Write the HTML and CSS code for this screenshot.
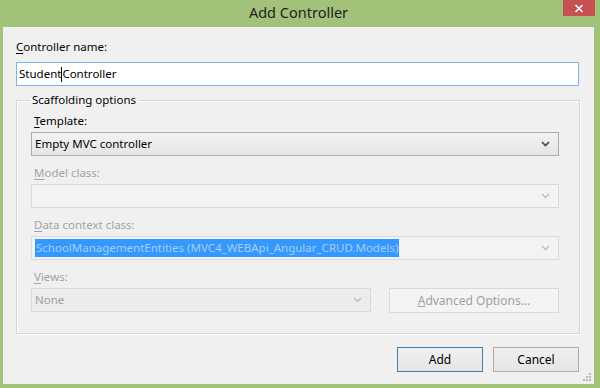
FILE: index.html
```html
<!DOCTYPE html>
<html lang="en">
<head>
    <meta charset="UTF-8">
    <title>Add Controller</title>
    <link rel="stylesheet" href="styles.css">
</head>
<body>
    <div class="window">
        <div class="titlebar">
            <span class="title">Add Controller</span>
            <button class="close" aria-label="Close">
                <svg width="10" height="9" viewBox="0 0 10 9"><path d="M1.5 1 L8.5 8 M8.5 1 L1.5 8" stroke="#fff" stroke-width="1.6"/></svg>
            </button>
        </div>

        <div class="client">
            <div class="label"><u>C</u>ontroller name:</div>
            <div class="textbox">Student<span class="caret"></span>Controller</div>

            <fieldset class="group">
                <legend>Scaffolding options</legend>

                <div class="field">
                    <div class="label"><u>T</u>emplate:</div>
                    <div class="combo">
                        <span class="combo-text">Empty MVC controller</span>
                        <svg class="chevron" width="9" height="6" viewBox="0 0 9 6"><path d="M1 1 L4.5 4.5 L8 1" fill="none" stroke="#444" stroke-width="1.6"/></svg>
                    </div>
                </div>

                <div class="field disabled">
                    <div class="label"><u>M</u>odel class:</div>
                    <div class="combo">
                        <span class="combo-text"></span>
                        <svg class="chevron" width="9" height="6" viewBox="0 0 9 6"><path d="M1 1 L4.5 4.5 L8 1" fill="none" stroke="#bcbcbc" stroke-width="1.3"/></svg>
                    </div>
                </div>

                <div class="field disabled">
                    <div class="label"><u>D</u>ata context class:</div>
                    <div class="combo">
                        <span class="combo-text"><span class="selected">SchoolManagementEntities (MVC4_WEBApi_Angular_CRUD.Models)</span></span>
                        <svg class="chevron" width="9" height="6" viewBox="0 0 9 6"><path d="M1 1 L4.5 4.5 L8 1" fill="none" stroke="#bcbcbc" stroke-width="1.3"/></svg>
                    </div>
                </div>

                <div class="field disabled">
                    <div class="label"><u>V</u>iews:</div>
                    <div class="row">
                        <div class="combo views">
                            <span class="combo-text">None</span>
                            <svg class="chevron" width="9" height="6" viewBox="0 0 9 6"><path d="M1 1 L4.5 4.5 L8 1" fill="none" stroke="#bcbcbc" stroke-width="1.3"/></svg>
                        </div>
                        <button class="btn advanced" disabled><u>A</u>dvanced Options...</button>
                    </div>
                </div>
            </fieldset>

            <div class="actions">
                <button class="btn default">Add</button>
                <button class="btn">Cancel</button>
            </div>

            <svg class="grip" width="9" height="9" viewBox="0 0 9 9" fill="#b8b8b8">
                <rect x="6" y="0" width="2" height="2"/>
                <rect x="3" y="3" width="2" height="2"/><rect x="6" y="3" width="2" height="2"/>
                <rect x="0" y="6" width="2" height="2"/><rect x="3" y="6" width="2" height="2"/><rect x="6" y="6" width="2" height="2"/>
            </svg>
        </div>
    </div>
</body>
</html>
```

FILE: styles.css
```css
body {
    margin: 0;
    background: #a1c278;
    font-family: "Noto Sans", "Open Sans", sans-serif;
    font-size: 11.5px;
    color: #000;
}
.window {
    width: 600px;
    height: 388px;
    display: flex;
    flex-direction: column;
    padding: 0 6px 4px 3px;
    box-sizing: border-box;
}
.titlebar {
    position: relative;
    height: 27px;
    display: flex;
    align-items: center;
    justify-content: center;
}
.title {
    font-size: 14.5px;
    color: #222;
    margin-top: -3px;
}
.close {
    position: absolute;
    top: 0;
    left: 560px;
    width: 32px;
    height: 16px;
    border: none;
    padding: 0;
    background: #c75050;
    display: flex;
    align-items: center;
    justify-content: center;
}
.client {
    position: relative;
    flex: 1;
    background: #f0f0f0;
    padding: 12px 15px 0 13px;
    display: flex;
    flex-direction: column;
}
.label {
    height: 16px;
    line-height: 16px;
}
.label u {
    text-decoration-thickness: 1px;
    text-underline-offset: 2px;
}
.textbox {
    margin-top: 7px;
    height: 24px;
    box-sizing: border-box;
    border: 1px solid #7eb4ea;
    background: #fff;
    padding: 0 2px;
    line-height: 22px;
    display: flex;
    align-items: center;
}
.caret {
    display: inline-block;
    width: 1px;
    height: 15px;
    background: #000;
}
.group {
    margin: 6px -1px 0 0;
    padding: 0 20px 20px 14px;
    border: 1px solid #d5d5d5;
    box-shadow: inset 1px 1px 0 #fff, 1px 1px 0 #fff;
    display: flex;
    flex-direction: column;
    gap: 9px;
}
.group legend {
    margin-left: -1px;
    padding: 0 3px 0 2px;
    height: 16px;
    line-height: 16px;
}
.field {
    display: flex;
    flex-direction: column;
}
.field:first-of-type {
    margin-top: 5px;
}
.field .label {
    padding-left: 3px;
}
.disabled .label {
    color: #a3a3a3;
}
.combo {
    margin-top: 3px;
    height: 24px;
    box-sizing: border-box;
    border: 1px solid #acacac;
    background: linear-gradient(#f2f2f2, #e5e5e5);
    display: flex;
    align-items: center;
    padding: 0 8px 0 3px;
}
.combo-text {
    flex: 1;
    line-height: 18px;
}
.disabled .combo {
    border-color: #dadada;
    background: #f3f3f3;
    color: #a0a0a0;
}
.disabled .combo.views {
    background: #ececec;
    border-color: #d9d9d9;
}
.selected {
    display: inline-block;
    background: #3399ff;
    color: #a9cdf3;
    padding: 0 1px;
}
.row {
    display: flex;
    gap: 18px;
    align-items: flex-start;
}
.views {
    flex: 0 0 340px;
}
.btn {
    font-family: inherit;
    font-size: 12px;
    height: 25px;
    border: 1px solid #acacac;
    background: linear-gradient(#f0f0f0, #e5e5e5);
    color: #000;
    padding: 0;
}
.advanced {
    margin-top: 3px;
    flex: 1;
    border-color: #d9d9d9;
    background: #f4f4f4;
    color: #a0a0a0;
}
.actions {
    margin-top: 13px;
    display: flex;
    justify-content: flex-end;
    gap: 10px;
}
.actions .btn {
    width: 86px;
}
.btn.default {
    border-color: #3c7fb1;
}
.grip {
    position: absolute;
    right: 2px;
    bottom: 2px;
}
```
